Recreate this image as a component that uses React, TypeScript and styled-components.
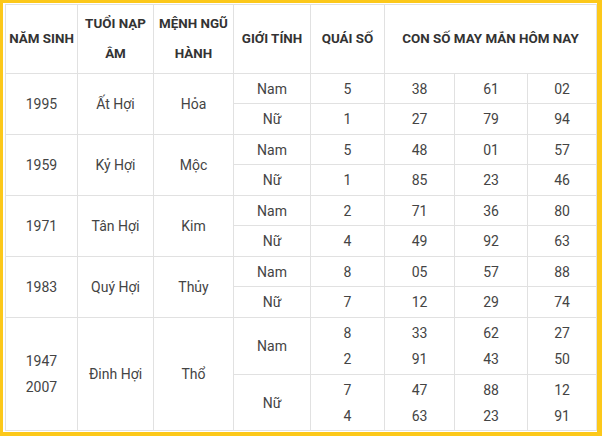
import React from "react";
import styled, { createGlobalStyle } from "styled-components";

const Global = createGlobalStyle`
  html, body { margin: 0; padding: 0; background: #fcc81a; }
  body { font-family: Roboto, "Noto Sans", "Liberation Sans", sans-serif; }
`;

const Frame = styled.div`
  width: 602px;
  height: 436px;
  box-sizing: border-box;
  background: #fcc81a;
  padding: 3px 5px 4px 3px;
`;

const Sheet = styled.div`
  background: #fff;
  height: 100%;
  box-sizing: border-box;
  padding: 1px 1px 1px 2px;
`;

const Table = styled.table`
  width: 591px;
  border-collapse: collapse;
  table-layout: fixed;
  font-size: 14px;
  color: #444;
`;

const Row = styled.tr<{ $h: number }>`
  height: ${(p) => p.$h}px;
`;

const Head = styled.th`
  border: 1px solid #e1e1e1;
  padding: 0;
  font-size: 13.4px;
  font-weight: 700;
  color: #333;
  line-height: 30px;
  text-align: center;
  vertical-align: middle;
`;

const Cell = styled.td`
  border: 1px solid #e1e1e1;
  padding: 0;
  text-align: center;
  vertical-align: middle;
  line-height: 26px;
`;

const Stack = styled.div`
  display: flex;
  flex-direction: column;
  line-height: 26px;
`;

type Sub = { sex: string; q: string[]; n: string[][] };
type Group = { years: string[]; tuoi: string; menh: string; subs: Sub[] };

const data: Group[] = [
  {
    years: ["1995"], tuoi: "Ất Hợi", menh: "Hỏa",
    subs: [
      { sex: "Nam", q: ["5"], n: [["38", "61", "02"]] },
      { sex: "Nữ", q: ["1"], n: [["27", "79", "94"]] },
    ],
  },
  {
    years: ["1959"], tuoi: "Kỷ Hợi", menh: "Mộc",
    subs: [
      { sex: "Nam", q: ["5"], n: [["48", "01", "57"]] },
      { sex: "Nữ", q: ["1"], n: [["85", "23", "46"]] },
    ],
  },
  {
    years: ["1971"], tuoi: "Tân Hợi", menh: "Kim",
    subs: [
      { sex: "Nam", q: ["2"], n: [["71", "36", "80"]] },
      { sex: "Nữ", q: ["4"], n: [["49", "92", "63"]] },
    ],
  },
  {
    years: ["1983"], tuoi: "Quý Hợi", menh: "Thủy",
    subs: [
      { sex: "Nam", q: ["8"], n: [["05", "57", "88"]] },
      { sex: "Nữ", q: ["7"], n: [["12", "29", "74"]] },
    ],
  },
  {
    years: ["1947", "2007"], tuoi: "Đinh Hợi", menh: "Thổ",
    subs: [
      { sex: "Nam", q: ["8", "2"], n: [["33", "62", "27"], ["91", "43", "50"]] },
      { sex: "Nữ", q: ["7", "4"], n: [["47", "88", "12"], ["63", "23", "91"]] },
    ],
  },
];

const heights = [30, 31, 30, 31, 30, 31, 30, 31, 57, 56];
const widths = [72, 76, 80, 77, 74, 70, 73, 69];

const Lines = ({ items }: { items: string[] }) =>
  items.length === 1 ? <>{items[0]}</> : <Stack>{items.map((t, i) => <span key={i}>{t}</span>)}</Stack>;

export default function App() {
  let r = 0;
  return (
    <>
      <Global />
      <Frame>
        <Sheet>
          <Table>
            <colgroup>
              {widths.map((w, i) => <col key={i} style={{ width: w }} />)}
            </colgroup>
            <thead>
              <Row $h={69}>
                <Head>NĂM SINH</Head>
                <Head>TUỔI NẠP ÂM</Head>
                <Head>MỆNH NGŨ HÀNH</Head>
                <Head>GIỚI TÍNH</Head>
                <Head>QUÁI SỐ</Head>
                <Head colSpan={3}>CON SỐ MAY MẮN HÔM NAY</Head>
              </Row>
            </thead>
            <tbody>
              {data.map((g, gi) =>
                g.subs.map((s, si) => {
                  const h = heights[r++];
                  return (
                    <Row $h={h} key={`${gi}-${si}`}>
                      {si === 0 && (
                        <>
                          <Cell rowSpan={g.subs.length}><Lines items={g.years} /></Cell>
                          <Cell rowSpan={g.subs.length}>{g.tuoi}</Cell>
                          <Cell rowSpan={g.subs.length}>{g.menh}</Cell>
                        </>
                      )}
                      <Cell>{s.sex}</Cell>
                      <Cell><Lines items={s.q} /></Cell>
                      {[0, 1, 2].map((c) => (
                        <Cell key={c}><Lines items={s.n.map((line) => line[c])} /></Cell>
                      ))}
                    </Row>
                  );
                })
              )}
            </tbody>
          </Table>
        </Sheet>
      </Frame>
    </>
  );
}
